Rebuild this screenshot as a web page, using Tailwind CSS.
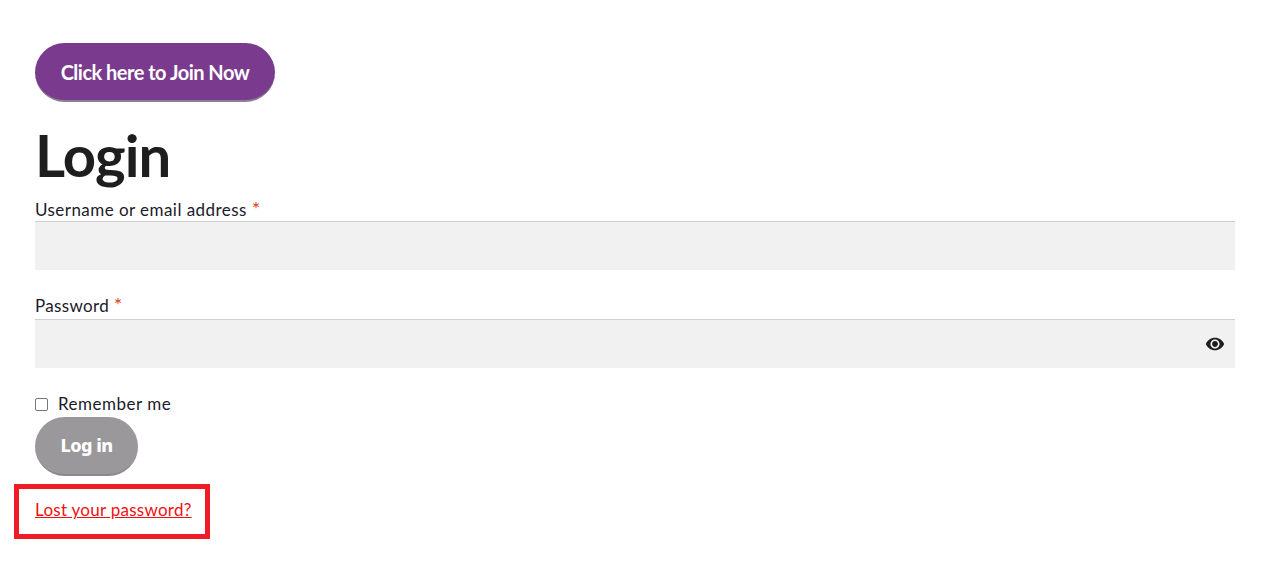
<!DOCTYPE html>
<html><head><meta charset="utf-8"><script src="https://cdn.jsdelivr.net/npm/@tailwindcss/browser@4"></script></head>
<body class="bg-white">
<div class="relative h-[567px] w-[1266px] overflow-hidden pt-[43px] pl-[35px] font-['Lato',sans-serif] text-[#1a1a2a]">
  <a class="flex h-[59px] w-[240px] items-center justify-center rounded-[30px] border-b-2 border-[#8a8090] bg-[#7a3b8f] text-[20px] font-bold tracking-[-0.5px] text-white">Click here to Join Now</a>
  <h1 class="mt-[23px] h-[60px] text-[58px] leading-[60px] font-bold tracking-[-0.9px] text-[#1e1e1e]">Login</h1>
  <form class="mt-[16px] w-[1200px] text-[17px] tracking-[0.33px]">
    <label class="-mt-[1px] mb-[1px] block h-[20px] leading-[20px] tracking-[0.45px]">Username or email address <span class="text-[20px] leading-[0] text-[#e2401c]">*</span></label>
    <div class="h-[49px] border-t border-[#d0d0d0] bg-[#f1f1f1]"></div>
    <label class="mt-[26px] block h-[23px] leading-[20px]">Password <span class="text-[20px] leading-[0] text-[#e2401c]">*</span></label>
    <div class="flex h-[49px] items-center justify-end border-t border-[#d0d0d0] bg-[#f1f1f1] pr-[10px]">
      <svg class="h-[20px] w-[20px]" viewBox="0 0 24 24" fill="#1e1e1e"><path d="M12 4.5C7 4.5 2.73 7.61 1 12c1.73 4.39 6 7.5 11 7.5s9.27-3.11 11-7.5c-1.73-4.39-6-7.5-11-7.5zM12 17.5c-3 0-5.500-2.500-5.500-5.500s2.500-5.500 5.500-5.500 5.500 2.500 5.500 5.500-2.500 5.500-5.500 5.500zm0-9c-1.900 0-3.500 1.600-3.500 3.500s1.600 3.500 3.500 3.500 3.500-1.600 3.500-3.500-1.600-3.500-3.500-3.500z"/></svg>
    </div>
    <label class="mt-[26px] flex h-[20px] items-center leading-[20px] tracking-[0.5px]">
      <input type="checkbox" class="h-[13px] w-[13px] appearance-none rounded-[2px] border border-[#767676] bg-white">
      <span class="ml-[10px]">Remember me</span>
    </label>
    <button type="button" class="mt-[3px] block h-[59px] w-[103px] rounded-[30px] border-b-2 border-[#8a888b] bg-[#9b989b] font-['Noto_Sans',sans-serif] text-[18px] font-extrabold tracking-[-0.5px] text-white">Log in</button>
    <a class="mt-[24px] block w-fit leading-[20px] tracking-[0.27px] text-[#f01010] underline">Lost your password?</a>
  </form>
  <div class="absolute top-[484px] left-[14px] h-[55px] w-[196px] border-[5px] border-[#ee1c25]"></div>
</div>
</body></html>
